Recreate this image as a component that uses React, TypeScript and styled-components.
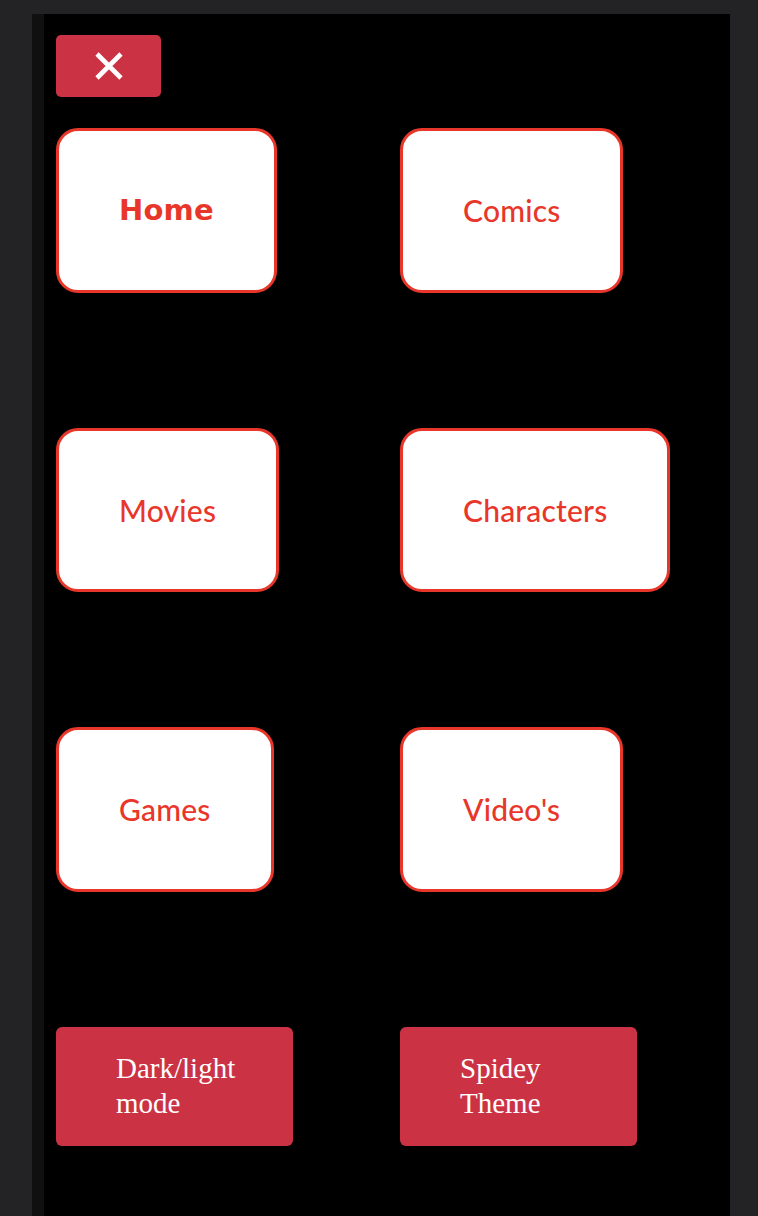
import React from "react";
import styled, { createGlobalStyle } from "styled-components";

const Global = createGlobalStyle`
  html, body { margin: 0; padding: 0; background: #232325; }
  * { box-sizing: border-box; }
`;

const Page = styled.div`
  padding: 14px 28px 0 32px;
  min-height: 1216px;
`;

const Panel = styled.nav`
  background: #000;
  border-left: 12px solid #101010;
  min-height: 1202px;
  padding: 21px 0 0 12px;
  display: flex;
  flex-direction: column;
  align-items: flex-start;
`;

const CloseButton = styled.button`
  width: 105px;
  height: 62px;
  border: none;
  border-radius: 5px;
  background: #cb3344;
  display: flex;
  align-items: center;
  justify-content: center;
  padding: 0;
  margin-bottom: 31px;
  cursor: pointer;
`;

const Grid = styled.div`
  display: grid;
  grid-template-columns: 344px auto;
  row-gap: 135px;
  justify-items: start;
`;

const NavCard = styled.a<{ $bold?: boolean }>`
  height: 164.5px;
  padding: 0 60px;
  display: flex;
  align-items: center;
  justify-content: center;
  background: #fff;
  border: 3px solid #e8372a;
  border-radius: 22px;
  color: #e8372a;
  font-family: ${(p) =>
    p.$bold ? '"DejaVu Sans", "Lato", sans-serif' : '"Lato", "Noto Sans", sans-serif'};
  font-size: ${(p) => (p.$bold ? "29px" : "30px")};
  font-weight: ${(p) => (p.$bold ? 700 : 500)};
  letter-spacing: 0.2px;
  text-decoration: none;
  white-space: nowrap;
`;

const ToggleButton = styled.button`
  width: 237px;
  height: 119px;
  border: none;
  border-radius: 6px;
  background: #cb3344;
  color: #fff;
  font-family: "Liberation Serif", "Times New Roman", serif;
  font-size: 29px;
  line-height: 35px;
  text-align: left;
  padding: 0 60px;
  cursor: pointer;
`;

const CloseIcon = () => (
  <svg width="30" height="28" viewBox="0 0 30 28" aria-hidden="true">
    <path d="M3 2 L27 26 M27 2 L3 26" stroke="#fff" strokeWidth="4.6" strokeLinecap="butt" />
  </svg>
);

const links = [
  { label: "Home", bold: true },
  { label: "Comics" },
  { label: "Movies" },
  { label: "Characters" },
  { label: "Games" },
  { label: "Video's" },
];

export default function App() {
  return (
    <>
      <Global />
      <Page>
        <Panel>
          <CloseButton aria-label="Close menu">
            <CloseIcon />
          </CloseButton>
          <Grid>
            {links.map((l) => (
              <NavCard key={l.label} href="#" $bold={l.bold}>
                {l.label}
              </NavCard>
            ))}
            <ToggleButton>Dark/light mode</ToggleButton>
            <ToggleButton>Spidey Theme</ToggleButton>
          </Grid>
        </Panel>
      </Page>
    </>
  );
}
